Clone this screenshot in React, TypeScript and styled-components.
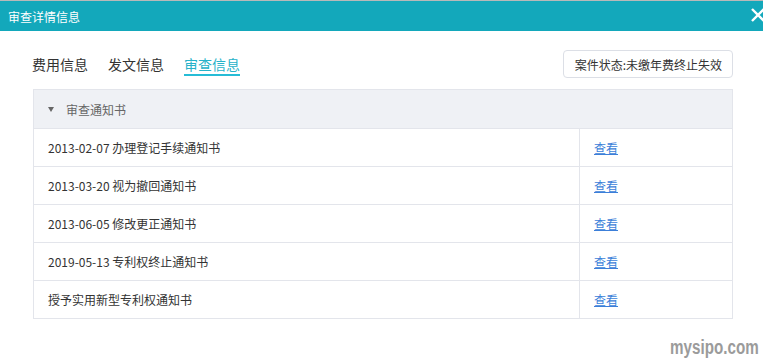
import React from 'react';
import styled, { createGlobalStyle } from 'styled-components';

const GlobalStyle = createGlobalStyle`
  html, body {
    margin: 0;
    padding: 0;
    background: #fff;
    overflow: hidden;
  }
  body {
    font-family: "Noto Sans CJK SC", "Liberation Sans", sans-serif;
    color: #333;
  }
`;

const Dialog = styled.div`
  position: relative;
  width: 763px;
  height: 362px;
  border-top: 1px solid #b9b9b9;
  box-sizing: border-box;
  overflow: hidden;
`;

const Header = styled.div`
  height: 30px;
  background: #13a8bb;
  display: flex;
  align-items: center;
  justify-content: space-between;
  padding-left: 8px;
  color: #fff;
  font-size: 12px;
`;

const Close = styled.svg`
  width: 14px;
  height: 14px;
  margin-right: -2px;
  margin-top: -3px;
`;

const Body = styled.div`
  padding: 19px 30px 0 32px;
`;

const Toolbar = styled.div`
  height: 28px;
  display: flex;
  align-items: center;
  justify-content: space-between;
`;

const Tabs = styled.div`
  display: flex;
  gap: 20px;
`;

const Tab = styled.div<{ $active?: boolean }>`
  padding-top: 2px;
  font-size: 14px;
  line-height: 20px;
  color: ${p => (p.$active ? '#27b2c9' : '#333')};
  border-bottom: 2px solid ${p => (p.$active ? '#26bcd6' : 'transparent')};
`;

const Status = styled.div`
  height: 26px;
  padding: 0 10px 0 11px;
  border: 1px solid #dcdfe6;
  border-radius: 4px;
  display: flex;
  align-items: center;
  font-size: 12px;
  color: #333;
`;

const Table = styled.div`
  margin-top: 11px;
  margin-left: 1px;
  border: 1px solid #e3e5eb;
  border-bottom: none;
`;

const GroupHead = styled.div`
  height: 38px;
  background: #eff1f5;
  border-bottom: 1px solid #e3e5eb;
  display: flex;
  align-items: center;
  padding-left: 14px;
  font-size: 12px;
  color: #666;
`;

const Caret = styled.span`
  width: 0;
  height: 0;
  border-left: 3px solid transparent;
  border-right: 3px solid transparent;
  border-top: 5px solid #666;
  margin-right: 12px;
`;

const Row = styled.div`
  display: grid;
  grid-template-columns: 545px 1fr;
  height: 37px;
  border-bottom: 1px solid #e3e5eb;
  font-size: 12px;
`;

const Cell = styled.div`
  display: flex;
  align-items: center;
  padding-left: 14px;
  & + & {
    border-left: 1px solid #e3e5eb;
  }
`;

const Link = styled.a`
  color: #3c7fd9;
  text-decoration: underline;
  cursor: pointer;
`;

const Watermark = styled.div`
  position: absolute;
  right: 4px;
  bottom: 5px;
  font-family: "Liberation Sans Narrow", "Liberation Sans", sans-serif;
  font-weight: bold;
  font-size: 20px;
  line-height: 20px;
  color: #9b9b9b;
  transform: scaleX(0.76);
  transform-origin: right center;
`;

const rows = [
  '2013-02-07 办理登记手续通知书',
  '2013-03-20 视为撤回通知书',
  '2013-06-05 修改更正通知书',
  '2019-05-13 专利权终止通知书',
  '授予实用新型专利权通知书',
];

export default function App() {
  return (
    <Dialog>
      <GlobalStyle />
      <Header>
        <span>审查详情信息</span>
        <Close viewBox="0 0 14 14">
          <path d="M1 1 L13 13 M13 1 L1 13" stroke="#fff" strokeWidth="2.4" />
        </Close>
      </Header>
      <Body>
        <Toolbar>
          <Tabs>
            <Tab>费用信息</Tab>
            <Tab>发文信息</Tab>
            <Tab $active>审查信息</Tab>
          </Tabs>
          <Status>案件状态:未缴年费终止失效</Status>
        </Toolbar>
        <Table>
          <GroupHead>
            <Caret />
            审查通知书
          </GroupHead>
          {rows.map(r => (
            <Row key={r}>
              <Cell>{r}</Cell>
              <Cell>
                <Link>查看</Link>
              </Cell>
            </Row>
          ))}
        </Table>
      </Body>
      <Watermark>mysipo.com</Watermark>
    </Dialog>
  );
}
